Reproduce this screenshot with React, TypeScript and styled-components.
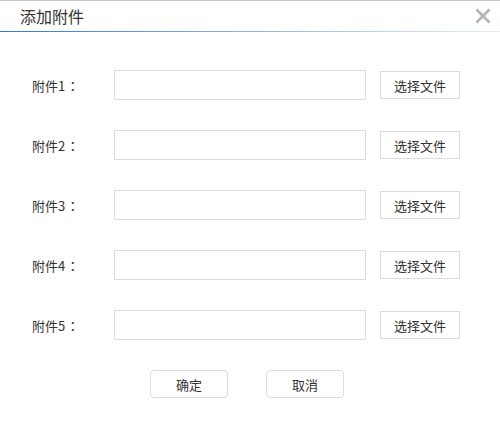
import React from "react";
import styled, { createGlobalStyle } from "styled-components";

const Global = createGlobalStyle`
  html, body { margin: 0; padding: 0; background: #fff; }
  body { font-family: "Noto Sans CJK SC", "Liberation Sans", sans-serif; color: #333; }
`;

const Dialog = styled.div`
  width: 500px;
  height: 441px;
  box-sizing: border-box;
  border-top: 1px solid #c8c8c8;
  background: #fff;
  display: flex;
  flex-direction: column;
`;

const Header = styled.div`
  height: 30px;
  display: flex;
  align-items: center;
  justify-content: space-between;
  padding: 0 8px 0 20px;
  position: relative;
  &::after {
    content: "";
    position: absolute;
    left: 0;
    right: 0;
    bottom: -1px;
    height: 1px;
    background: linear-gradient(to right, #2f7ad6, #9cc0ea 60%, #e6eef8);
  }
`;

const Title = styled.span`
  font-size: 16px;
  color: #333;
  line-height: 30px;
`;

const Close = styled.button`
  border: none;
  background: none;
  padding: 0;
  width: 18px;
  height: 18px;
  display: flex;
  align-items: center;
  justify-content: center;
  cursor: pointer;
`;

const Form = styled.div`
  display: flex;
  flex-direction: column;
  gap: 30px;
  padding: 39px 0 0 32px;
`;

const Row = styled.div`
  display: flex;
  align-items: center;
  height: 30px;
`;

const Label = styled.label`
  width: 82px;
  font-size: 13px;
  color: #333;
`;

const Colon = styled.span`
  font-family: "Noto Sans CJK TC", "Noto Sans CJK SC", sans-serif;
  margin-left: 1px;
`;

const Input = styled.div`
  width: 252px;
  height: 30px;
  box-sizing: border-box;
  border: 1px solid #dcdcdc;
  background: #fff;
`;

const FileButton = styled.button`
  margin-left: 14px;
  width: 80px;
  height: 28px;
  box-sizing: border-box;
  border: 1px solid #dcdcdc;
  background: #fff;
  font-family: inherit;
  font-size: 13px;
  color: #333;
  padding: 0;
`;

const Actions = styled.div`
  display: flex;
  justify-content: center;
  gap: 38px;
  padding: 30px 0 0 0;
  margin-left: -6px;
`;

const ActionButton = styled.button`
  width: 78px;
  height: 28px;
  box-sizing: border-box;
  border: 1px solid #dcdcdc;
  border-radius: 4px;
  background: #fff;
  font-family: inherit;
  font-size: 13px;
  color: #333;
  padding: 0;
`;

export default function App() {
  return (
    <>
      <Global />
      <Dialog>
        <Header>
          <Title>添加附件</Title>
          <Close aria-label="close">
            <svg width="16" height="16" viewBox="0 0 16 16">
              <path d="M1.5 1.5 L14.5 14.5 M14.5 1.5 L1.5 14.5" stroke="#b4b4b4" strokeWidth="2.6" />
            </svg>
          </Close>
        </Header>
        <Form>
          {[1, 2, 3, 4, 5].map((n) => (
            <Row key={n}>
              <Label>
                附件{n}
                <Colon>：</Colon>
              </Label>
              <Input />
              <FileButton>选择文件</FileButton>
            </Row>
          ))}
        </Form>
        <Actions>
          <ActionButton>确定</ActionButton>
          <ActionButton>取消</ActionButton>
        </Actions>
      </Dialog>
    </>
  );
}
